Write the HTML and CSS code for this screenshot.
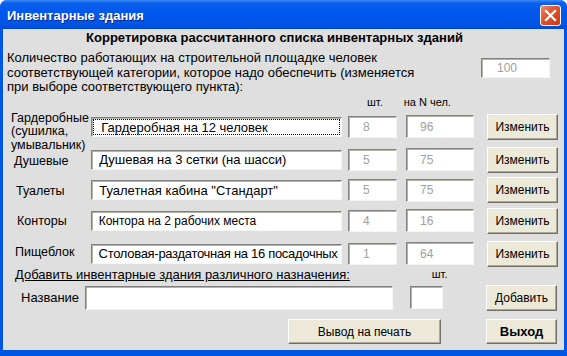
FILE: index.html
```html
<!DOCTYPE html>
<html lang="ru">
<head>
    <meta charset="UTF-8">
    <title>Инвентарные здания</title>
    <link rel="stylesheet" href="styles.css">
</head>
<body>
    <div class="window">
        <div class="titlebar">
            <span class="title">Инвентарные здания</span>
            <span class="close">
                <svg width="13" height="13" viewBox="0 0 13 13"><path d="M2 2 L11 11 M11 2 L2 11" stroke="#fff" stroke-width="2.2" stroke-linecap="square"/></svg>
            </span>
        </div>
        <div class="client">
            <div class="heading">Корретировка рассчитанного списка инвентарных зданий</div>
            <div class="intro">
                <p>Количество работающих на строительной площадке человек<br>соответствующей категории, которое надо обеспечить (изменяется<br>при выборе соответствующего пункта):</p>
                <div class="field total">100</div>
            </div>
            <div class="colheads">
                <span class="h-qty">шт.</span>
                <span class="h-n">на N чел.</span>
            </div>

            <div class="row row1">
                <span class="label">Гардеробные<br>(сушилка,<br>умывальник)</span>
                <div class="field name focus"><span class="dots">&nbsp;&nbsp;Гардеробная на 12 человек</span></div>
                <div class="field qty">8</div>
                <div class="field num">96</div>
                <div class="btn">Изменить</div>
            </div>
            <div class="row row2">
                <span class="label">Душевые</span>
                <div class="field name">&nbsp;&nbsp;Душевая на 3 сетки (на шасси)</div>
                <div class="field qty">5</div>
                <div class="field num">75</div>
                <div class="btn">Изменить</div>
            </div>
            <div class="row row3">
                <span class="label">Туалеты</span>
                <div class="field name">&nbsp;&nbsp;Туалетная кабина "Стандарт"</div>
                <div class="field qty">5</div>
                <div class="field num">75</div>
                <div class="btn">Изменить</div>
            </div>
            <div class="row row4">
                <span class="label">Конторы</span>
                <div class="field name small">&nbsp;&nbsp;Контора на 2 рабочих места</div>
                <div class="field qty">4</div>
                <div class="field num">16</div>
                <div class="btn">Изменить</div>
            </div>
            <div class="row row5">
                <span class="label">Пищеблок</span>
                <div class="field name"><span class="clip">&nbsp;&nbsp;Столовая-раздаточная на 16 посадочных</span></div>
                <div class="field qty">1</div>
                <div class="field num">64</div>
                <div class="btn">Изменить</div>
            </div>

            <div class="add-title">
                <u>Добавить инвентарные здания различного назначения:</u>
                <span class="h-add">шт.</span>
            </div>
            <div class="add-row">
                <span class="label">Название</span>
                <div class="field newname"></div>
                <div class="field newqty"></div>
                <div class="btn">Добавить</div>
            </div>
            <div class="footer">
                <div class="btn print">Вывод на печать</div>
                <div class="btn exit">Выход</div>
            </div>
        </div>
    </div>
</body>
</html>
```

FILE: styles.css
```css
*{ margin: 0; padding: 0; box-sizing: border-box; }
body{ width: 567px; height: 356px; overflow: hidden; background: #fff; font-family: "Liberation Sans", Arial, sans-serif; font-size: 13px; color: #000; }

.window{ width: 567px; height: 356px; background: #0055e5; border-radius: 7px 7px 0 0; display: flex; flex-direction: column; }
.titlebar{ height: 29px; display: flex; align-items: center; justify-content: space-between; padding: 0 6px 0 7px; border-radius: 7px 7px 0 0;
    background: linear-gradient(#3b8df8 0, #0b5fea 3px, #0058ee 40%, #0055e6 85%, #0047d2 100%); }
.title{ color: #fff; font-weight: bold; font-size: 13px; text-shadow: 1px 1px #0a2a8a; padding-top: 2px; }
.close{ width: 21px; height: 21px; border: 1px solid #fff; border-radius: 3px; display: flex; align-items: center; justify-content: center;
    background: linear-gradient(135deg, #f08a6a 0, #e2562f 40%, #c93a12 100%); margin-top: 2px; }

.client{ margin: 0 3px; height: 321px; background: #dfdfdf; }

.heading{ font-weight: bold; text-align: center; padding: 1px 18px 0 0; line-height: 16px; }

.intro{ display: flex; margin-top: 5px; padding-left: 4px; }
.intro p{ line-height: 14.5px; width: 474px; }
.total{ width: 69px; height: 20px; margin-top: 7px; padding-left: 15px; }

.colheads{ height: 14px; display: flex; font-size: 11px; line-height: 14px; }
.h-qty{ margin-left: 364px; }
.h-n{ margin-left: 21px; }

.field{ background: #fff; border-top: 1px solid #808080; border-left: 1px solid #808080; border-right: 1px solid #f6f6f2; border-bottom: 1px solid #f6f6f2;
    box-shadow: inset 1px 1px #b5b3a8; color: #a0a0a0; font-size: 12px; display: flex; align-items: center; white-space: nowrap; overflow: hidden; }

.row{ display: grid; grid-template-columns: 88px 257px 58px 81px 71px; grid-template-rows: minmax(0, 1fr); align-items: center; height: 30px; }
.row .label{ padding-left: 10px; line-height: 13.5px; font-size: 12.5px; }
.row1{ height: 36px; }
.row1 .label{ padding-left: 8px; align-self: start; margin-top: 3px; line-height: 13.8px; }
.row2 .label{ padding-top: 5px; padding-left: 11px; }
.row3 .label{ padding-top: 3px; padding-left: 13px; }
.row4 .label{ padding-top: 3px; padding-left: 14px; }
.row5 .label{ padding-bottom: 2px; padding-left: 12px; }
.row3{ height: 31px; }
.row5{ height: 28px; margin-top: 4px; }
.name{ width: 251px; height: 20px; color: #000; font-size: 13px; }
.name.small{ font-size: 12px; }
.clip{ display: block; width: 100%; overflow: hidden; letter-spacing: -0.3px; }
.focus{ padding: 1px; }
.dots{ display: block; width: 100%; height: 100%; border: 1px dotted #000; line-height: 15px; }
.qty{ width: 49px; height: 22px; padding-left: 14px; }
.num{ width: 68px; height: 23px; padding-left: 13px; }

.btn{ width: 71px; height: 26px; background: #ece9d8; border-top: 1px solid #fff; border-left: 1px solid #fff; border-right: 1px solid #716f64; border-bottom: 1px solid #716f64;
    box-shadow: inset -1px -1px #aca899; display: flex; align-items: center; justify-content: center; font-size: 12px; }

.add-title{ display: flex; height: 13px; line-height: 13px; padding-left: 12px; }
.h-add{ margin-left: 82px; font-size: 11px; }

.add-row{ display: flex; align-items: center; height: 34px; }
.add-row .label{ width: 82px; padding-left: 18px; }
.newname{ width: 308px; height: 24px; }
.newqty{ width: 33px; height: 23px; margin-left: 17px; }
.add-row .btn{ margin-left: 43px; }

.footer{ display: flex; align-items: center; height: 34px; }
.print{ width: 153px; height: 25px; margin-left: 285px; }
.exit{ height: 25px; margin-left: 45px; font-weight: bold; font-size: 13px; }
```
